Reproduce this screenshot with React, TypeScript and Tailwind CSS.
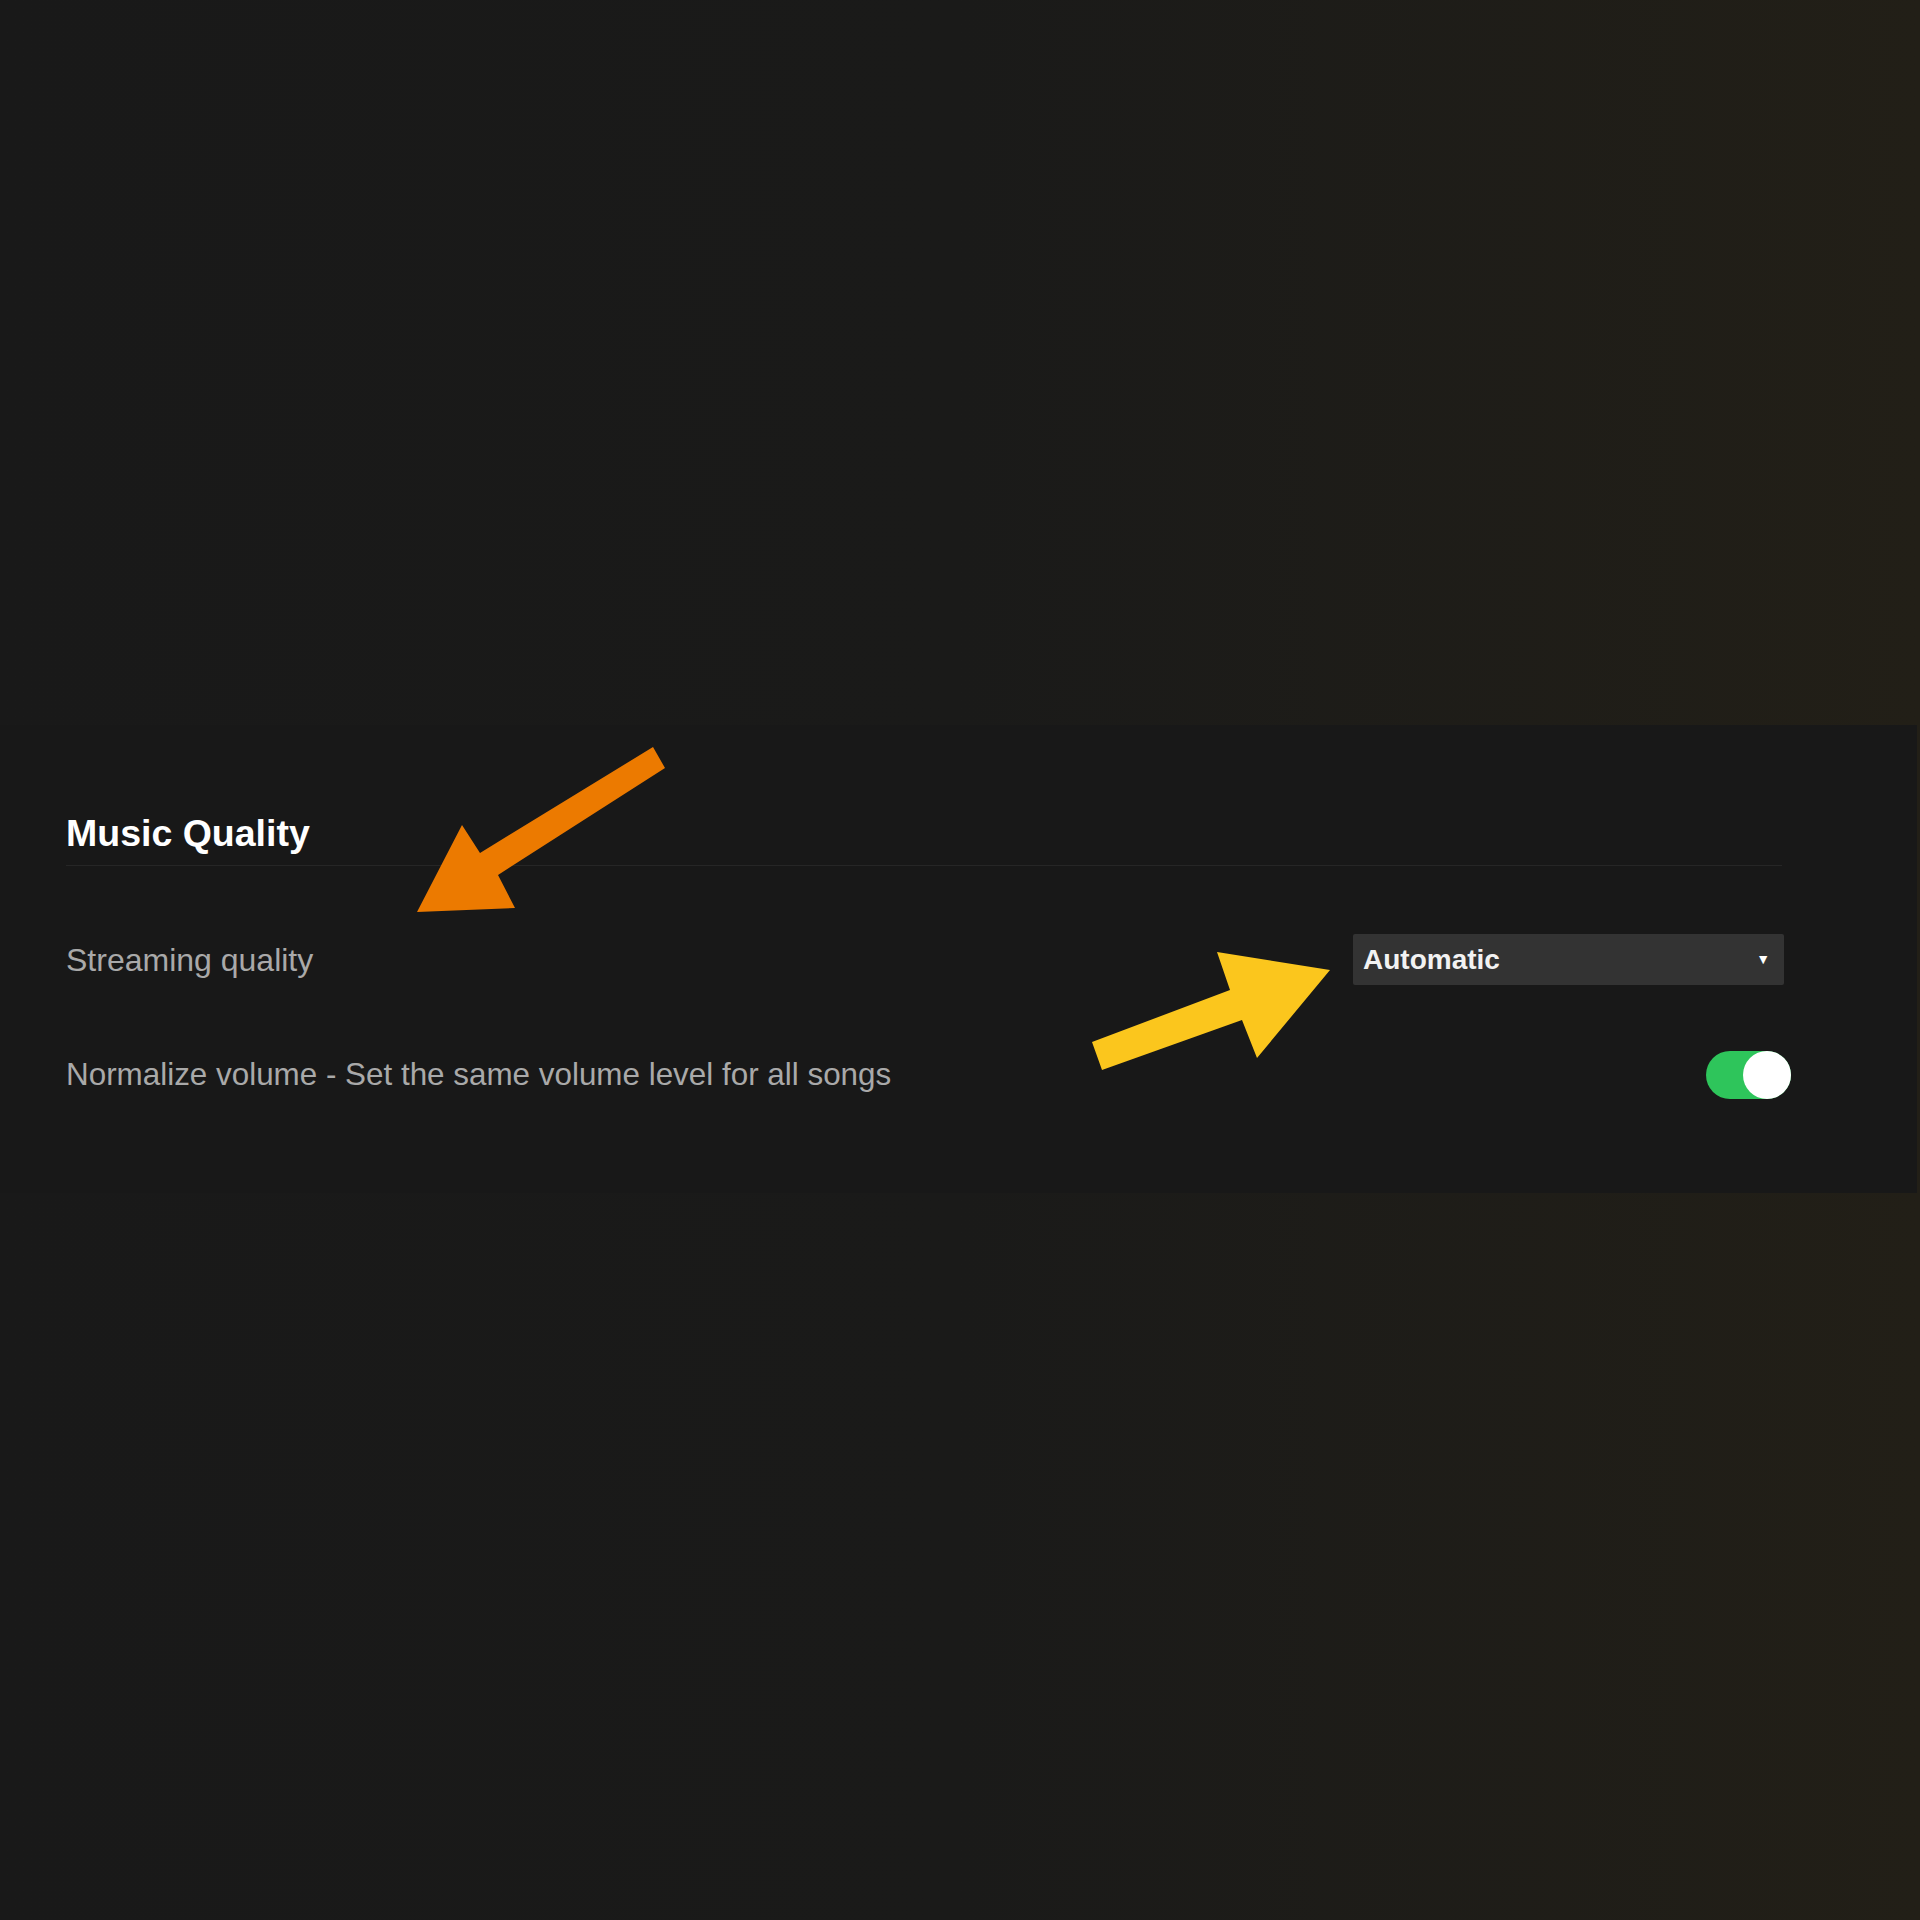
import React from "react";

const font = { fontFamily: '"Liberation Sans", Arial, sans-serif' };

function Arrows() {
  return (
    <svg
      className="absolute left-0 top-0 pointer-events-none"
      width={1920}
      height={1920}
      viewBox="0 0 1920 1920"
    >
      <polygon
        points="653,747 665,768 498,875 515,908 417,912 462,825 480,853"
        fill="#ec7a00"
      />
      <polygon
        points="1092,1042 1230,990 1217,952 1330,970 1257,1058 1242,1020 1102,1070"
        fill="#fbc61d"
      />
    </svg>
  );
}

export default function App() {
  return (
    <div
      className="relative w-full h-[1920px] flex flex-col bg-gradient-to-r from-[#191919] via-[#1a1a19] to-[#221f17]"
      style={font}
    >
      <div className="h-[725px]" />

      <div className="w-[1917px] h-[468px] bg-[#181818] pl-[66px] pt-[86px]">
        <div className="w-[1716px] border-b border-[#262626] pb-[10px]">
          <h1 className="text-[37.5px] leading-[44px] font-bold text-white">
            Music Quality
          </h1>
        </div>

        <div className="w-[1718px] mt-[68px] h-[51px] flex flex-row items-center justify-between">
          <span className="text-[32px] text-[#a9a9a9]">Streaming quality</span>
          <div className="w-[431px] h-[51px] bg-[#333333] rounded-[2px] flex flex-row items-center justify-between pl-[10px] pr-[14px]">
            <span className="text-[28px] font-bold text-[#f2f2f2]">Automatic</span>
            <span className="text-[14px] text-white">▼</span>
          </div>
        </div>

        <div className="w-[1718px] mt-[65px] h-[49px] flex flex-row items-center justify-between">
          <span className="text-[31.4px] text-[#a9a9a9]">
            Normalize volume - Set the same volume level for all songs
          </span>
          <div className="w-[85px] h-[48px] rounded-full bg-[#2ec55b] flex flex-row justify-end mr-[-7px]">
            <div className="w-[48px] h-[48px] rounded-full bg-white" />
          </div>
        </div>
      </div>

      <div className="flex-1" />
      <Arrows />
    </div>
  );
}
